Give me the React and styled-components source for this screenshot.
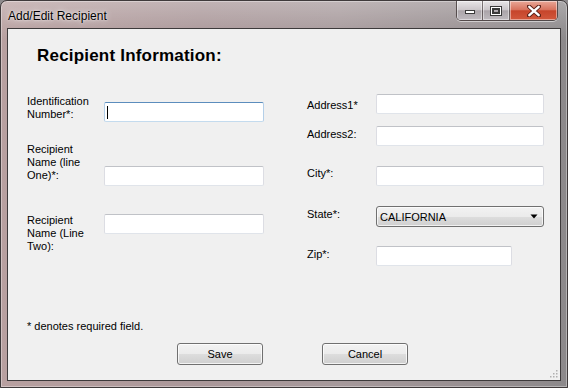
import styled, { createGlobalStyle } from 'styled-components';

const GlobalStyle = createGlobalStyle`
  html, body { margin: 0; padding: 0; background: #8d8a8c; }
  body { font-family: "Liberation Sans", Arial, sans-serif; }
  * { box-sizing: border-box; }
`;

const Window = styled.div`
  width: 568px;
  height: 388px;
  border: 1px solid #3f3a3b;
  border-radius: 7px 7px 0 0;
  padding: 0 6px 6px;
  display: flex;
  flex-direction: column;
  background:
    linear-gradient(180deg, rgba(255,255,255,0.28) 0px, rgba(255,255,255,0.08) 26px, rgba(255,255,255,0) 40px),
    linear-gradient(90deg, #b8a0a0 0%, #aa9799 35%, #a6999b 60%, #968e90 85%, #8c898b 100%);
  box-shadow: inset 0 0 0 1px rgba(255,255,255,0.35);
`;

const TitleBar = styled.div`
  height: 27px;
  display: flex;
  align-items: flex-start;
  justify-content: space-between;
  padding-left: 1px;
  padding-right: 3px;
`;

const Title = styled.div`
  font-size: 12px;
  line-height: 14px;
  margin-top: 8px;
  color: #000;
  text-shadow: 0 0 6px rgba(255,255,255,0.9), 0 0 2px rgba(255,255,255,0.8);
`;

const Caption = styled.div`
  display: flex;
  height: 20px;
  border: 1px solid rgba(40,30,30,0.65);
  border-top: none;
  border-radius: 0 0 5px 5px;
  overflow: hidden;
  box-shadow: 0 1px 0 rgba(255,255,255,0.5);
`;

const CapButton = styled.div`
  width: ${(p) => p.$w}px;
  height: 100%;
  display: flex;
  align-items: center;
  justify-content: center;
  border-right: ${(p) => (p.$last ? 'none' : '1px solid rgba(40,30,30,0.55)')};
  background: ${(p) =>
    p.$close
      ? 'linear-gradient(180deg, #e9a898 0%, #d8745f 45%, #c6452b 52%, #d2583c 100%)'
      : 'linear-gradient(180deg, rgba(240,238,240,0.85) 0%, rgba(214,210,214,0.75) 45%, rgba(170,164,170,0.7) 52%, rgba(200,196,202,0.75) 100%)'};
  box-shadow: inset 0 0 0 1px rgba(255,255,255,0.45);
`;

const Client = styled.div`
  position: relative;
  flex: 1;
  border: 1px solid #3d3a3b;
  background: #f0f0f0;
  padding: 17px 0 0;
  display: flex;
  flex-direction: column;
  color: #000;
`;

const Heading = styled.h1`
  margin: 0;
  padding-left: 29px;
  font-size: 17px;
  line-height: 20px;
  letter-spacing: 0.2px;
  font-weight: bold;
`;

const Form = styled.div`
  margin-top: 28px;
  display: grid;
  grid-template-columns: 280px 1fr;
  padding-left: 19px;
  height: 172px;
`;

const Column = styled.div`
  display: flex;
  flex-direction: column;
`;

const Row = styled.div`
  display: flex;
  align-items: flex-start;
  margin-top: ${(p) => p.$mt || 0}px;
`;

const Label = styled.div`
  width: ${(p) => p.$w}px;
  flex: none;
  font-size: 11px;
  line-height: 13px;
  padding-top: ${(p) => p.$pt || 0}px;
`;

const TextBox = styled.div`
  width: ${(p) => p.$w || 160}px;
  height: 20px;
  margin-top: ${(p) => p.$mt || 0}px;
  background: #fff;
  border: 1px solid;
  border-radius: 2px;
  border-color: ${(p) =>
    p.$focused ? '#5b8dbd #b4cfe8 #c4dbee #b4cfe8' : '#c0c2c7 #dcdde3 #e0e4ea #dcdde3'};
  display: flex;
  align-items: center;
  padding-left: 2px;
`;

const Caret = styled.span`
  width: 1px;
  height: 13px;
  background: #000;
`;

const Combo = styled.div`
  width: 168px;
  height: 21px;
  border: 1px solid #707070;
  border-radius: 3px;
  background: linear-gradient(180deg, #f2f2f2 0%, #ebebeb 50%, #dddddd 51%, #cfcfcf 100%);
  box-shadow: inset 0 0 0 1px rgba(255,255,255,0.7);
  display: flex;
  align-items: center;
  justify-content: space-between;
  padding: 0 5px 0 3px;
  font-size: 11px;
`;

const Note = styled.div`
  margin-top: 54px;
  padding-left: 19px;
  font-size: 11px;
  line-height: 13px;
`;

const Buttons = styled.div`
  margin-top: 10px;
  padding-left: 169px;
  display: flex;
  gap: 59px;
`;

const Button = styled.button`
  width: 86px;
  height: 22px;
  border: 1px solid #707070;
  border-radius: 3px;
  background: linear-gradient(180deg, #f2f2f2 0%, #ebebeb 50%, #dddddd 51%, #cfcfcf 100%);
  box-shadow: inset 0 0 0 1px rgba(255,255,255,0.75);
  font-family: "Liberation Sans", Arial, sans-serif;
  font-size: 11px;
  color: #000;
  padding: 0;
`;

const Grip = styled.svg`
  position: absolute;
  right: 2px;
  bottom: 2px;
`;

function MinGlyph() {
  return (
    <svg width="12" height="8" viewBox="0 0 12 8">
      <rect x="1.5" y="3.5" width="9" height="3" fill="#fff" stroke="#3a3a3a" />
    </svg>
  );
}

function MaxGlyph() {
  return (
    <svg width="12" height="10" viewBox="0 0 12 10">
      <rect x="1.5" y="1.5" width="9" height="7" fill="none" stroke="#3a3a3a" strokeWidth="3" />
      <rect x="1.5" y="1.5" width="9" height="7" fill="none" stroke="#fff" strokeWidth="1" />
      <rect x="3.5" y="3.5" width="5" height="3" fill="none" stroke="#3a3a3a" />
    </svg>
  );
}

function CloseGlyph() {
  return (
    <svg width="14" height="12" viewBox="0 0 14 12">
      <path d="M2 1.5 L12 10.5 M12 1.5 L2 10.5" stroke="#5a2018" strokeWidth="4.2" strokeLinecap="round" />
      <path d="M2.3 1.8 L11.7 10.2 M11.7 1.8 L2.3 10.2" stroke="#fff" strokeWidth="2.4" strokeLinecap="round" />
    </svg>
  );
}

function ArrowDown() {
  return (
    <svg width="8" height="5" viewBox="0 0 8 5">
      <path d="M0.5 0.5 H7.5 L4 4.5 Z" fill="#000" />
    </svg>
  );
}

export default function App() {
  return (
    <>
      <GlobalStyle />
      <Window>
        <TitleBar>
          <Title>Add/Edit Recipient</Title>
          <Caption>
            <CapButton $w={26}><MinGlyph /></CapButton>
            <CapButton $w={27}><MaxGlyph /></CapButton>
            <CapButton $w={47} $close $last><CloseGlyph /></CapButton>
          </Caption>
        </TitleBar>
        <Client>
          <Heading>Recipient Information:</Heading>
          <Form>
            <Column>
              <Row>
                <Label $w={77} $pt={1}>Identification<br />Number*:</Label>
                <TextBox $mt={8} $focused><Caret /></TextBox>
              </Row>
              <Row $mt={21}>
                <Label $w={77}>Recipient<br />Name (line<br />One)*:</Label>
                <TextBox $mt={23} />
              </Row>
              <Row $mt={28}>
                <Label $w={77}>Recipient<br />Name (Line<br />Two):</Label>
                <TextBox />
              </Row>
            </Column>
            <Column>
              <Row>
                <Label $w={69} $pt={5}>Address1*</Label>
                <TextBox $w={168} />
              </Row>
              <Row $mt={12}>
                <Label $w={69} $pt={2}>Address2:</Label>
                <TextBox $w={168} />
              </Row>
              <Row $mt={20}>
                <Label $w={69} $pt={1}>City*:</Label>
                <TextBox $w={168} />
              </Row>
              <Row $mt={20}>
                <Label $w={69} $pt={2}>State*:</Label>
                <Combo>
                  <span>CALIFORNIA</span>
                  <ArrowDown />
                </Combo>
              </Row>
              <Row $mt={19}>
                <Label $w={69} $pt={2}>Zip*:</Label>
                <TextBox $w={136} />
              </Row>
            </Column>
          </Form>
          <Note>* denotes required field.</Note>
          <Buttons>
            <Button>Save</Button>
            <Button>Cancel</Button>
          </Buttons>
          <Grip width="10" height="10" viewBox="0 0 10 10">
            {[[8, 2], [8, 5], [5, 5], [8, 8], [5, 8], [2, 8]].map(([x, y]) => (
              <rect key={`${x}-${y}`} x={x} y={y} width="1.5" height="1.5" fill="#b0b0b0" />
            ))}
          </Grip>
        </Client>
      </Window>
    </>
  );
}
